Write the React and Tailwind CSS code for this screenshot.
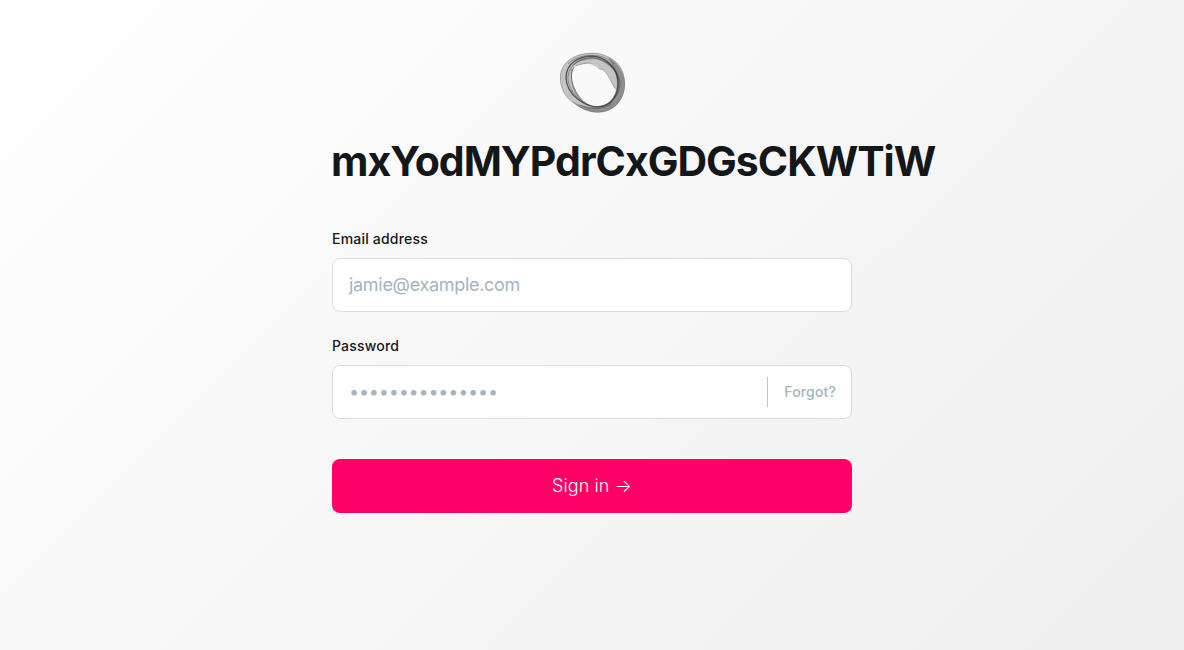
function Logo() {
  return (
    <svg width="66" height="62" viewBox="559 52 66 62" fill="none">
      <path fillRule="evenodd" fill="#c4c4c4" d="M589 53C599 52 610 56 617 63C623 69 625 77 625 85C624 101 613 112 597 112.5C590 112 582 109 575 104C565 98 560 88 560 78C560 64 572 54 589 53ZM576 66C570 70 570 81 576 91C581 101 587 106 597 106C608 106 614 99 616 91C612 83 610 77 605 71C602 69 600 70 598 67C595 63 592 64 589 63C585 64 580 64 576 66Z" />
      <path fill="#6a6a6a" fillOpacity=".6" d="M608 57C622 65 627 79 624 91C621 105 611 113 597 112.5C587 112 579 108 572 101C584 109 602 109 610 101C619 91 620 77 608 57Z" />
      <path fill="#666" fillOpacity=".5" d="M571 67C578 56 592 53 603 58C613 61 619 72 620 82C615 69 605 60 594 59C585 59 576 62 571 67Z" />
      <path stroke="#303030" strokeWidth="1.2" strokeOpacity=".8" d="M566 78C566 64 578 56 592 56C606 57 617 68 618 81C619 96 611 106 599 107C584 107 567 95 566 78Z" />
      <path stroke="#444" strokeWidth=".8" strokeOpacity=".7" d="M568 76C570 63 583 57 594 58C608 60 620 73 620 84C619 99 606 109 591 106C579 102 567 89 568 76Z" />
      <path stroke="#666" strokeWidth=".7" strokeOpacity=".55" d="M589 53.4C572 54.4 560.4 64 560.4 78C560.4 88 565 98 575 104C582 109 590 112 597 112C613 112 624 101 624.6 85C624.6 77 623 69 617 63C610 56 599 52.4 589 53.4Z" />
      <path stroke="#555" strokeWidth=".7" strokeOpacity=".8" d="M572 69C569 83 578 102 594 107M574 67C567 80 575 99 589 106M618 79C622 85 613 100 610 104M568 64C579 53 603 52 614 64M580 105C590 110 602 110 611 104" />
      <path stroke="#888" strokeWidth=".7" d="M576 66C583 63 590 62 594 65C597 65 598 70 602 69C608 73 611 82 615 88" />
    </svg>
  );
}

export default function App() {
  return (
    <div className="min-h-screen bg-[linear-gradient(135deg,#ffffff,#eeeeee)] font-['Inter',sans-serif] text-[#14171a]">
      <main className="mx-auto flex w-[520px] flex-col pt-[52px]">
        <div className="flex justify-center"><Logo /></div>
        <h1 className="mt-[21px] -ml-px text-[41px] leading-[52px] font-bold tracking-[-1px] whitespace-nowrap">mxYodMYPdrCxGDGsCKWTiW</h1>
        <form className="mt-[42px] flex flex-col">
          <label className="text-sm leading-5 font-medium tracking-[0.2px]">Email address</label>
          <div className="mt-[9px] flex h-[54px] items-center rounded-lg border border-[#dddddd] bg-white px-4 text-lg tracking-[-0.3px] text-[#a5b4c0]">jamie@example.com</div>
          <label className="mt-6 text-sm leading-5 font-medium tracking-[0.2px]">Password</label>
          <div className="mt-[9px] flex h-[54px] items-center rounded-lg border border-[#dddddd] bg-white pr-[15px] pl-4 text-lg tracking-[-0.2px] text-[#a5b4c0]">
            <span className="flex-1">•••••••••••••••</span>
            <span className="flex h-[30px] items-center border-l border-[#c4c4c4] pl-4 text-sm font-medium tracking-[0.15px]">Forgot?</span>
          </div>
          <button type="button" className="mt-10 h-[54px] rounded-lg bg-[#ff0066] text-lg font-light tracking-[0.1px] text-white">Sign in →</button>
        </form>
      </main>
    </div>
  );
}
